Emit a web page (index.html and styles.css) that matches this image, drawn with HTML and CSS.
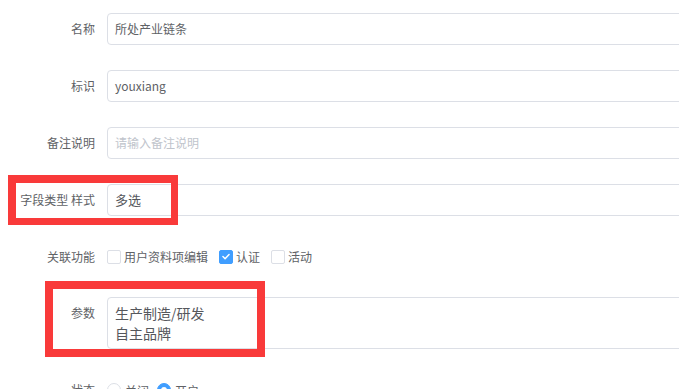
FILE: index.html
```html
<!DOCTYPE html>
<html lang="zh">
<head>
<meta charset="utf-8">
<title>表单</title>
<link rel="stylesheet" href="styles.css">
</head>
<body>
<div class="form">
  <div class="row">
    <div class="label">名称</div>
    <div class="field input">所处产业链条</div>
  </div>
  <div class="row">
    <div class="label">标识</div>
    <div class="field input">youxiang</div>
  </div>
  <div class="row">
    <div class="label">备注说明</div>
    <div class="field input placeholder">请输入备注说明</div>
  </div>
  <div class="row">
    <div class="label">字段类型 样式</div>
    <div class="field input dark">多选</div>
  </div>
  <div class="row row-check">
    <div class="label">关联功能</div>
    <div class="options">
      <span class="opt"><span class="box"></span>用户资料项编辑</span>
      <span class="opt"><span class="box checked"><svg viewBox="0 0 13 13" width="13" height="13"><path d="M3.2 6.6 L5.5 8.9 L9.8 4.3" fill="none" stroke="#fff" stroke-width="1.6" stroke-linecap="round" stroke-linejoin="round"/></svg></span>认证</span>
      <span class="opt"><span class="box"></span>活动</span>
    </div>
  </div>
  <div class="row">
    <div class="label">参数</div>
    <div class="field textarea">生产制造/研发<br>自主品牌</div>
  </div>
  <div class="row">
    <div class="label">状态</div>
    <div class="options">
      <span class="opt radio-opt"><span class="radio"></span>关闭</span>
      <span class="opt radio-opt"><span class="radio on"></span>开启</span>
    </div>
  </div>
</div>
<div class="mark mark-1"></div>
<div class="mark mark-2"></div>
</body>
</html>
```

FILE: styles.css
```css
html, body {
  margin: 0;
  padding: 0;
  overflow: hidden;
  background: #fff;
}
body {
  font-family: "Noto Sans CJK SC", "Noto Sans", sans-serif;
  font-size: 12px;
  color: #606266;
  width: 679px;
  height: 389px;
  position: relative;
}
.form {
  padding-top: 13px;
}
.row {
  display: grid;
  grid-template-columns: 95px 600px;
  column-gap: 12px;
  margin-bottom: 25px;
  align-items: start;
}
.label {
  text-align: right;
  line-height: 32px;
  height: 32px;
  color: #606266;
  white-space: nowrap;
}
.row-check .label {
  height: 31px;
  line-height: 31px;
}
.field {
  box-sizing: border-box;
  border: 1px solid #dcdfe6;
  border-radius: 4px;
  padding: 0 7px;
}
.input {
  height: 32px;
  line-height: 30px;
  color: #606266;
}
.placeholder {
  color: #c0c4cc;
}
.dark {
  color: #55575c;
  font-size: 13px;
}
.textarea {
  height: 52px;
  padding: 5px 7px;
  font-size: 14px;
  line-height: 20px;
  color: #55575c;
}
.options {
  display: flex;
  align-items: center;
  height: 32px;
}
.row-check .options {
  height: 31px;
}
.opt {
  display: inline-flex;
  align-items: center;
  margin-right: 11px;
  color: #606266;
  white-space: nowrap;
}
.box {
  box-sizing: border-box;
  width: 14px;
  height: 14px;
  border: 1px solid #dcdfe6;
  border-radius: 2px;
  margin-right: 3px;
  display: inline-flex;
  align-items: center;
  justify-content: center;
  background: #fff;
}
.box.checked {
  background: #409eff;
  border-color: #409eff;
}
.box svg {
  display: block;
}
.radio-opt {
  margin-right: 8px;
}
.radio {
  box-sizing: border-box;
  width: 14px;
  height: 14px;
  border: 1px solid #dcdfe6;
  border-radius: 50%;
  margin-right: 4px;
  position: relative;
  background: #fff;
}
.radio.on {
  border-color: #409eff;
  background: #409eff;
}
.radio.on::after {
  content: "";
  position: absolute;
  left: 3px;
  top: 3px;
  width: 6px;
  height: 6px;
  border-radius: 50%;
  background: #fff;
}
.mark {
  position: absolute;
  box-sizing: border-box;
  border: 8px solid #f93a3a;
}
.mark-1 {
  left: 8px;
  top: 175px;
  width: 170px;
  height: 50px;
  border-width: 8px 7px 7px 8px;
}
.mark-2 {
  left: 45px;
  top: 281px;
  width: 220px;
  height: 76px;
}
```
